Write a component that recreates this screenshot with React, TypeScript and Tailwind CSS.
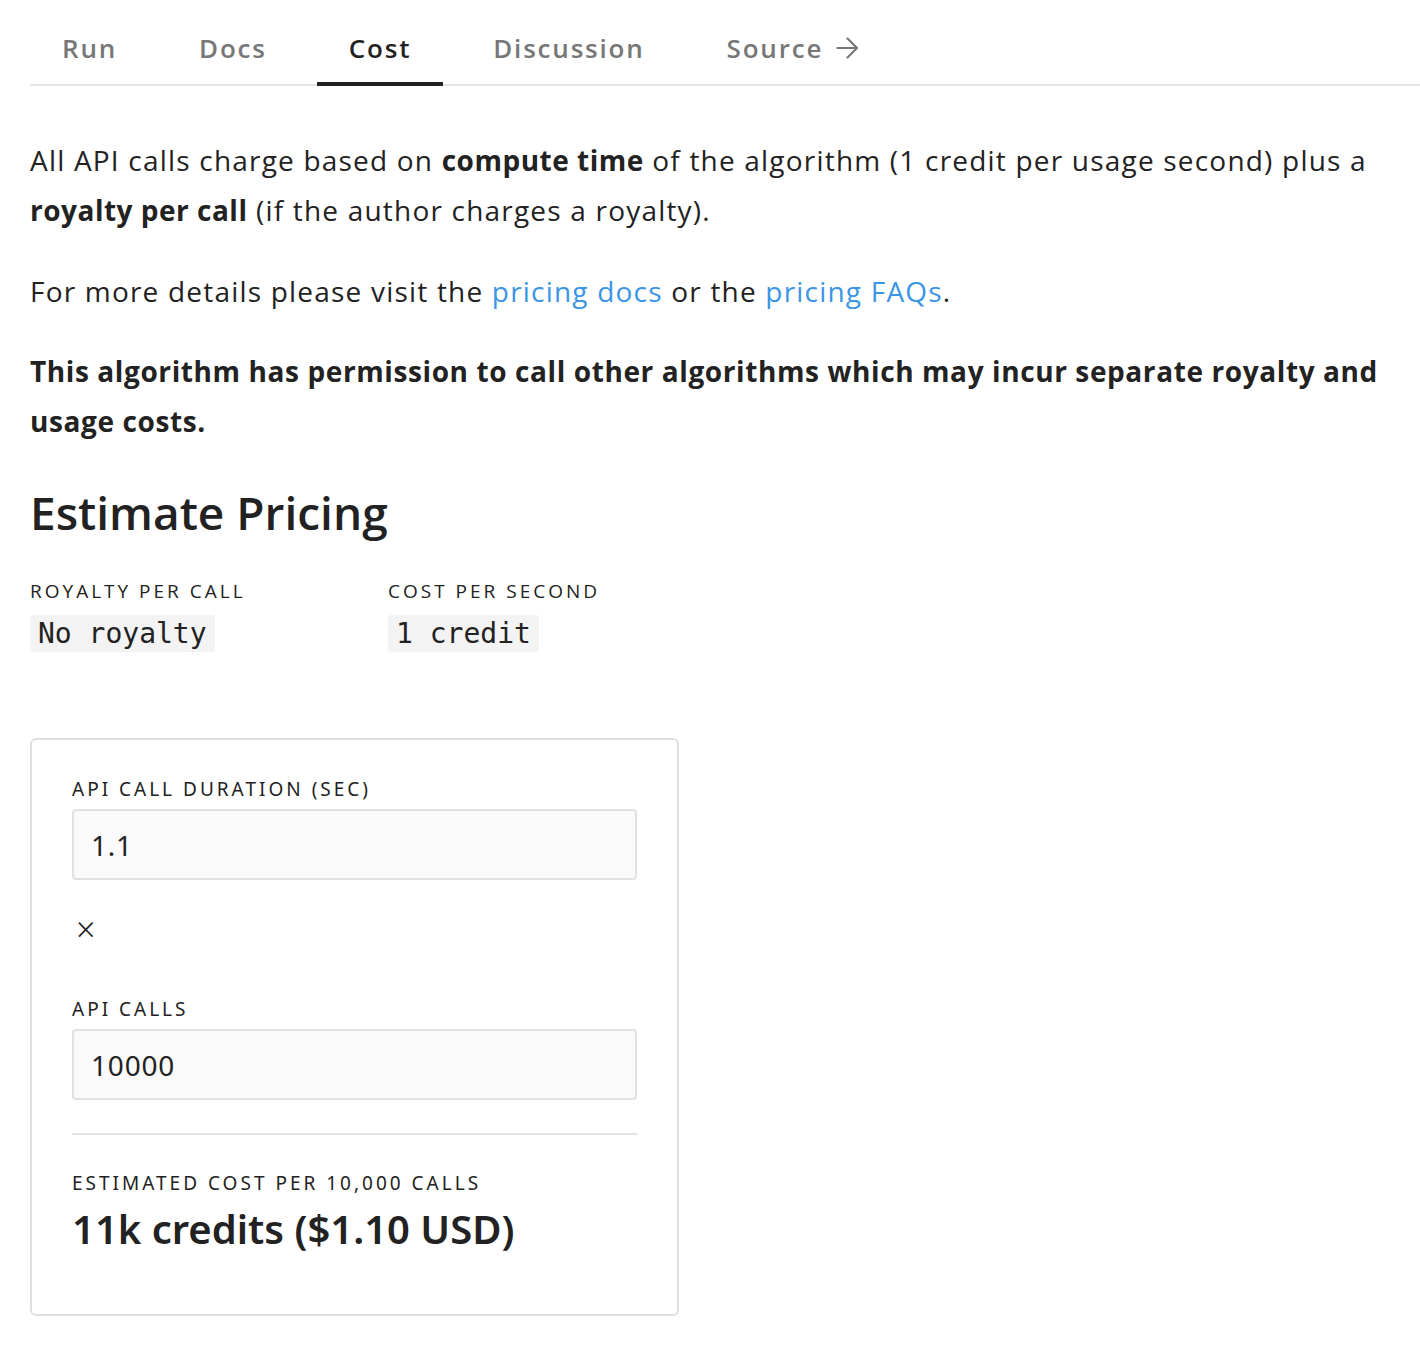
const tabs = ["Run", "Docs", "Cost", "Discussion", "Source"];

function Label({ children }: { children: React.ReactNode }) {
  return (
    <div className="text-[19px] leading-[24px] tracking-[3px] uppercase text-[#222]">
      {children}
    </div>
  );
}

function Field({ label, value }: { label: string; value: string }) {
  return (
    <div className="flex flex-col">
      <Label>{label}</Label>
      <div className="mt-[8px] h-[71px] flex items-center px-[17px] bg-[#fafafa] border-2 border-[#e2e2e2] rounded-[4px] text-[28px] tracking-[0.8px] text-[#222]">
        {value}
      </div>
    </div>
  );
}

export default function App() {
  return (
    <div
      className="w-[1420px] min-h-[1352px] bg-white pl-[30px] text-[#222]"
      style={{ fontFamily: "'Open Sans', sans-serif" }}
    >
      <nav className="flex gap-[18px] border-b-2 border-[#e4e4e4] pt-[29px]">
        {tabs.map((tab) => (
          <div
            key={tab}
            className={
              "px-[32px] pb-[15px] flex items-center gap-[13px] text-[26px] leading-[38px] font-semibold tracking-[1.8px] border-b-4 -mb-[2px] " +
              (tab === "Cost" ? "text-[#222] border-[#222]" : "text-[#777] border-transparent")
            }
          >
            {tab}
            {tab === "Source" && (
              <svg width="23" height="22" viewBox="0 0 23 22" fill="none" stroke="currentColor" strokeWidth="2.2" strokeLinecap="round" strokeLinejoin="round">
                <path d="M1.5 11h19.5M11.5 1.5l9.5 9.5-9.5 9.5" />
              </svg>
            )}
          </div>
        ))}
      </nav>

      <div className="w-[1375px] text-[28px] leading-[50px] tracking-[1.2px]">
        <p className="mt-[49px]">
          All API calls charge based on <b className="font-bold tracking-[0.5px]">compute time</b> of
          the algorithm (1 credit per usage second) plus a{" "}
          <b className="font-bold tracking-[0.5px]">royalty per call</b> (if the author charges a
          royalty).
        </p>
        <p className="mt-[31px]">
          For more details please visit the <span className="text-[#3b95e6]">pricing docs</span> or
          the <span className="text-[#3b95e6]">pricing FAQs</span>.
        </p>
        <p className="mt-[30px] font-bold tracking-[0.6px]">
          This algorithm has permission to call other algorithms which may incur separate royalty
          and usage costs.
        </p>
      </div>

      <h2 className="mt-[36px] text-[46px] leading-[60px] font-semibold">Estimate Pricing</h2>

      <div className="mt-[37px] flex">
        <div className="w-[358px] flex flex-col">
          <Label>Royalty per call</Label>
          <code
            className="mt-[12px] self-start bg-[#f3f3f3] rounded-[3px] px-[8px] h-[37px] flex items-center text-[28px]"
            style={{ fontFamily: "'DejaVu Sans Mono', monospace" }}
          >
            No royalty
          </code>
        </div>
        <div className="flex flex-col">
          <Label>Cost per second</Label>
          <code
            className="mt-[12px] self-start bg-[#f3f3f3] rounded-[3px] px-[8px] h-[37px] flex items-center text-[28px]"
            style={{ fontFamily: "'DejaVu Sans Mono', monospace" }}
          >
            1 credit
          </code>
        </div>
      </div>

      <div
        className="mt-[86px] w-[649px] border-2 border-[#e0e0e0] rounded-[6px] pt-[37px] pb-[59px] px-[40px]"
        style={{ fontFamily: "'Noto Sans', sans-serif" }}
      >
        <Field label="API Call Duration (sec)" value="1.1" />
        <div className="mt-[34px] ml-[4px] text-[34px] leading-[30px] font-light">×</div>
        <div className="mt-[53px]">
          <Field label="API Calls" value="10000" />
        </div>
        <div className="mt-[33px] border-t-2 border-[#e2e2e2]" />
        <div className="mt-[36px]">
          <Label>Estimated cost per 10,000 calls</Label>
        </div>
        <div className="mt-[8px] text-[40px] leading-[52px] font-semibold">
          11k credits ($1.10 USD)
        </div>
      </div>
    </div>
  );
}
